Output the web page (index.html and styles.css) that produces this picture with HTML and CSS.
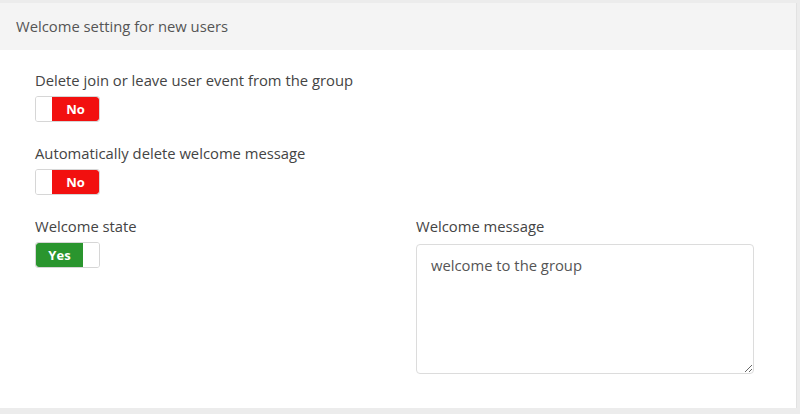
FILE: index.html
```html
<!DOCTYPE html>
<html lang="en">
<head>
<meta charset="UTF-8">
<meta name="viewport" content="width=device-width, initial-scale=1.0">
<title>Welcome setting</title>
<link rel="stylesheet" href="styles.css">
</head>
<body>
    <div class="card">
        <div class="card-header">Welcome setting for new users</div>

        <div class="card-body">
            <div class="field">
                <label>Delete join or leave user event from the group</label>
                <div class="toggle off"><span class="knob"></span><span class="state">No</span></div>
            </div>

            <div class="field">
                <label>Automatically delete welcome message</label>
                <div class="toggle off"><span class="knob"></span><span class="state">No</span></div>
            </div>

            <div class="row">
                <div class="field">
                    <label>Welcome state</label>
                    <div class="toggle on"><span class="state">Yes</span><span class="knob"></span></div>
                </div>
                <div class="field">
                    <label for="welcome-msg">Welcome message</label>
                    <textarea id="welcome-msg" name="welcome-msg">welcome to the group</textarea>
                </div>
            </div>
        </div>
    </div>
</body>
</html>
```

FILE: styles.css
```css
body {
    font-family: 'Open Sans', 'Noto Sans', sans-serif;
    margin: 0;
    padding: 0;
    background-color: #ececec;
}
.card {
    width: 796px;
    height: 405px;
    margin-top: 3px;
    background-color: #fff;
    border-right: 1px solid #e2e2e2;
}
.card-header {
    height: 47px;
    line-height: 47px;
    padding-left: 16px;
    background-color: #f4f4f4;
    color: #555;
    font-size: 14.8px;
}
.card-body {
    padding: 20px 0 0 35px;
}
.field {
    margin-bottom: 21px;
}
label {
    display: block;
    margin-bottom: 6px;
    color: #444;
    font-size: 14.8px;
    line-height: 20px;
}
.row {
    display: grid;
    grid-template-columns: 381px 338px;
}
.toggle {
    display: flex;
    width: 65px;
    height: 26px;
    border: 1px solid #d6d6d6;
    border-radius: 3px;
    box-sizing: border-box;
    overflow: hidden;
}
.toggle .knob {
    width: 16px;
    background-color: #fff;
}
.toggle .state {
    flex: 1;
    color: #fff;
    font-size: 13px;
    font-weight: bold;
    line-height: 24px;
    text-align: center;
}
.toggle.off .state {
    background-color: #f2100f;
    border-radius: 0 3px 3px 0;
}
.toggle.on .state {
    background-color: #2a952e;
    border-radius: 3px 0 0 3px;
}
textarea {
    display: block;
    width: 338px;
    height: 130px;
    margin-top: 8px;
    padding: 10px 14px;
    border: 1px solid #dcdcdc;
    border-radius: 4px;
    box-sizing: border-box;
    color: #555;
    font-family: 'Open Sans', 'Noto Sans', sans-serif;
    font-size: 14.8px;
    line-height: 20px;
}
```
